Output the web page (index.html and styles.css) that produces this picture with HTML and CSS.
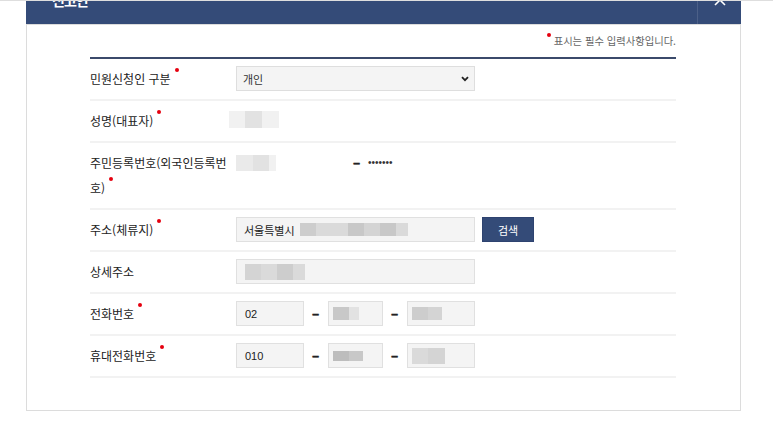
FILE: index.html
```html
<!DOCTYPE html>
<html lang="ko">
<head>
<meta charset="utf-8">
<title>신고인</title>
<link rel="stylesheet" href="styles.css">
</head>
<body>
<div class="modal">
  <div class="modal-head">
    <h2 class="title">신고인</h2>
    <button class="close" type="button" aria-label="닫기">
      <svg width="12" height="12" viewBox="0 0 12 12"><path d="M1 1 L11 11 M11 1 L1 11" stroke="#fff" stroke-width="1.6" fill="none"/></svg>
    </button>
  </div>
  <div class="modal-body">
    <p class="notice"><span class="req req-notice"></span>표시는 필수 입력사항입니다.</p>
    <div class="form">
      <div class="row">
        <div class="label">민원신청인 구분<span class="req"></span></div>
        <div class="field">
          <div class="select"><span>개인</span>
            <svg width="8" height="6" viewBox="0 0 8 6"><path d="M1 1.2 L4 4.2 L7 1.2" stroke="#222" stroke-width="1.8" fill="none"/></svg>
          </div>
        </div>
      </div>
      <div class="row">
        <div class="label">성명(대표자)<span class="req"></span></div>
        <div class="field">
          <span class="blur h17 pull"><i class="k1"></i><i class="k3 w17"></i><i class="k1 w17"></i></span>
        </div>
      </div>
      <div class="row">
        <div class="label">주민등록번호(외국인등록번호)<span class="req"></span></div>
        <div class="field">
          <span class="rrn-front"><span class="blur h16"><i class="k2 w17"></i><i class="k3"></i><i class="k1 w7"></i></span></span>
          <span class="dash">–</span>
          <span class="masked">•••••••</span>
        </div>
      </div>
      <div class="row">
        <div class="label">주소(체류지)<span class="req"></span></div>
        <div class="field">
          <div class="input w-full pad-addr">서울특별시<span class="blur h13 gap"><i class="k6"></i><i class="k4"></i><i class="k4"></i><i class="k7"></i><i class="k5"></i><i class="k7"></i><i class="k4 w12"></i></span></div>
          <button class="btn" type="button">검색</button>
        </div>
      </div>
      <div class="row">
        <div class="label">상세주소</div>
        <div class="field">
          <div class="input w-full"><span class="blur h16"><i class="k5"></i><i class="k4"></i><i class="k6"></i><i class="k4 w12"></i></span></div>
        </div>
      </div>
      <div class="row">
        <div class="label">전화번호<span class="req"></span></div>
        <div class="field">
          <div class="input w-first">02</div>
          <span class="dash">–</span>
          <div class="input w-mid pad-s"><span class="blur h13"><i class="k7"></i><i class="k3 w10"></i></span></div>
          <span class="dash">–</span>
          <div class="input w-last pad-s"><span class="blur h13"><i class="k6"></i><i class="k5 w14"></i></span></div>
        </div>
      </div>
      <div class="row">
        <div class="label">휴대전화번호<span class="req"></span></div>
        <div class="field">
          <div class="input w-first">010</div>
          <span class="dash">–</span>
          <div class="input w-mid pad-s"><span class="blur h10"><i class="k8"></i><i class="k7 w14"></i></span></div>
          <span class="dash">–</span>
          <div class="input w-last pad-s"><span class="blur h16"><i class="k4"></i><i class="k5 w17"></i></span></div>
        </div>
      </div>
    </div>
  </div>
</div>
</body>
</html>
```
FILE: styles.css
```css
* { box-sizing: border-box; }

body {
  margin: 0;
  background: #fff;
  color: #333;
  font-family: "Noto Sans CJK KR", "Liberation Sans", sans-serif;
}

body::before {
  content: "";
  position: fixed;
  left: 0;
  right: 0;
  top: 0;
  height: 1px;
  background: #dedede;
  z-index: 10;
}

.modal {
  width: 715px;
  margin: -24px 0 0 26px;
}

.modal-head {
  height: 48px;
  background: #344b78;
  display: flex;
  align-items: center;
}

.title {
  flex: 1;
  margin: 0;
  padding-left: 26px;
  color: #fff;
  font-size: 14px;
  font-weight: 700;
  letter-spacing: -1px;
}

.close {
  width: 44px;
  height: 48px;
  padding: 0;
  border: 0;
  border-left: 1px solid rgba(255, 255, 255, 0.12);
  background: transparent;
  display: flex;
  align-items: center;
  justify-content: center;
}

.modal-body {
  border: 1px solid #dcdcdc;
  padding: 8px 64px 32px 63px;
}

.notice {
  margin: 0 0 8px;
  text-align: right;
  font-size: 10.3px;
  line-height: 16px;
  color: #666;
}

.req {
  display: inline-block;
  width: 4px;
  height: 4px;
  border-radius: 50%;
  background: #e5000f;
  margin-left: 4px;
  vertical-align: 12px;
}

.req-notice {
  margin: 0 3px 0 0;
  vertical-align: 8px;
}

.form {
  border-top: 2px solid #3b4a6b;
}

.row {
  display: flex;
  align-items: flex-start;
  padding: 7px 0 8px;
  border-bottom: 2px solid #f2f2f2;
}

.label {
  width: 146px;
  flex: none;
  padding-right: 6px;
  font-size: 12px;
  line-height: 25px;
  color: #222;
}

.field {
  display: flex;
  align-items: center;
  height: 25px;
  font-size: 11px;
}

.select {
  width: 239px;
  height: 25px;
  background: #f4f4f4;
  border: 1px solid #dedede;
  display: flex;
  align-items: center;
  justify-content: space-between;
  padding: 0 5px 0 6px;
  font-size: 11px;
  color: #333;
}

.input {
  height: 25px;
  background: #f4f4f4;
  border: 1px solid #e0e0e0;
  display: flex;
  align-items: center;
  padding: 0 8px;
  font-family: "Liberation Sans", "Noto Sans CJK KR", sans-serif;
  font-size: 11px;
  color: #222;
}

.pad-addr { padding-left: 7px; }
.pad-s { padding-left: 4px; }

.w-full { width: 239px; }
.w-first { width: 68px; }
.w-mid { width: 55px; }
.w-last { width: 68px; }

.dash {
  width: 7px;
  margin: 0 9px 0 8px;
  font-family: "Liberation Sans", sans-serif;
  font-size: 12px;
  font-weight: 700;
  color: #222;
  -webkit-text-stroke: 0.5px #222;
  text-align: center;
}

.rrn-front {
  width: 117px;
  display: flex;
  align-items: center;
}

.rrn-front + .dash { margin-left: 0; margin-right: 8px; }

.masked {
  font-family: "Liberation Sans", sans-serif;
  font-size: 10px;
  color: #333;
}

.btn {
  margin-left: 7px;
  width: 52px;
  height: 25px;
  background: #344b78;
  border: 1px solid #2e4370;
  color: #fff;
  font-family: "Noto Sans CJK KR", sans-serif;
  font-size: 11px;
  padding: 0;
}

.blur {
  display: inline-flex;
  flex: none;
}

.blur i {
  display: block;
  width: 16px;
  height: 100%;
}

.pull { margin-left: -7px; margin-top: -3px; }
.gap { margin-left: 5px; }

.h10 { height: 10px; }
.h13 { height: 13px; }
.h16 { height: 16px; }
.h17 { height: 17px; }

.blur .w7 { width: 7px; }
.blur .w10 { width: 10px; }
.blur .w12 { width: 12px; }
.blur .w14 { width: 14px; }
.blur .w17 { width: 17px; }

.k1 { background: #f1f1f1; }
.k2 { background: #eaeaea; }
.k3 { background: #e2e2e2; }
.k4 { background: #dadada; }
.k5 { background: #d4d4d4; }
.k6 { background: #cdcdcd; }
.k7 { background: #c8c8c8; }
.k8 { background: #bdbdbd; }
```
